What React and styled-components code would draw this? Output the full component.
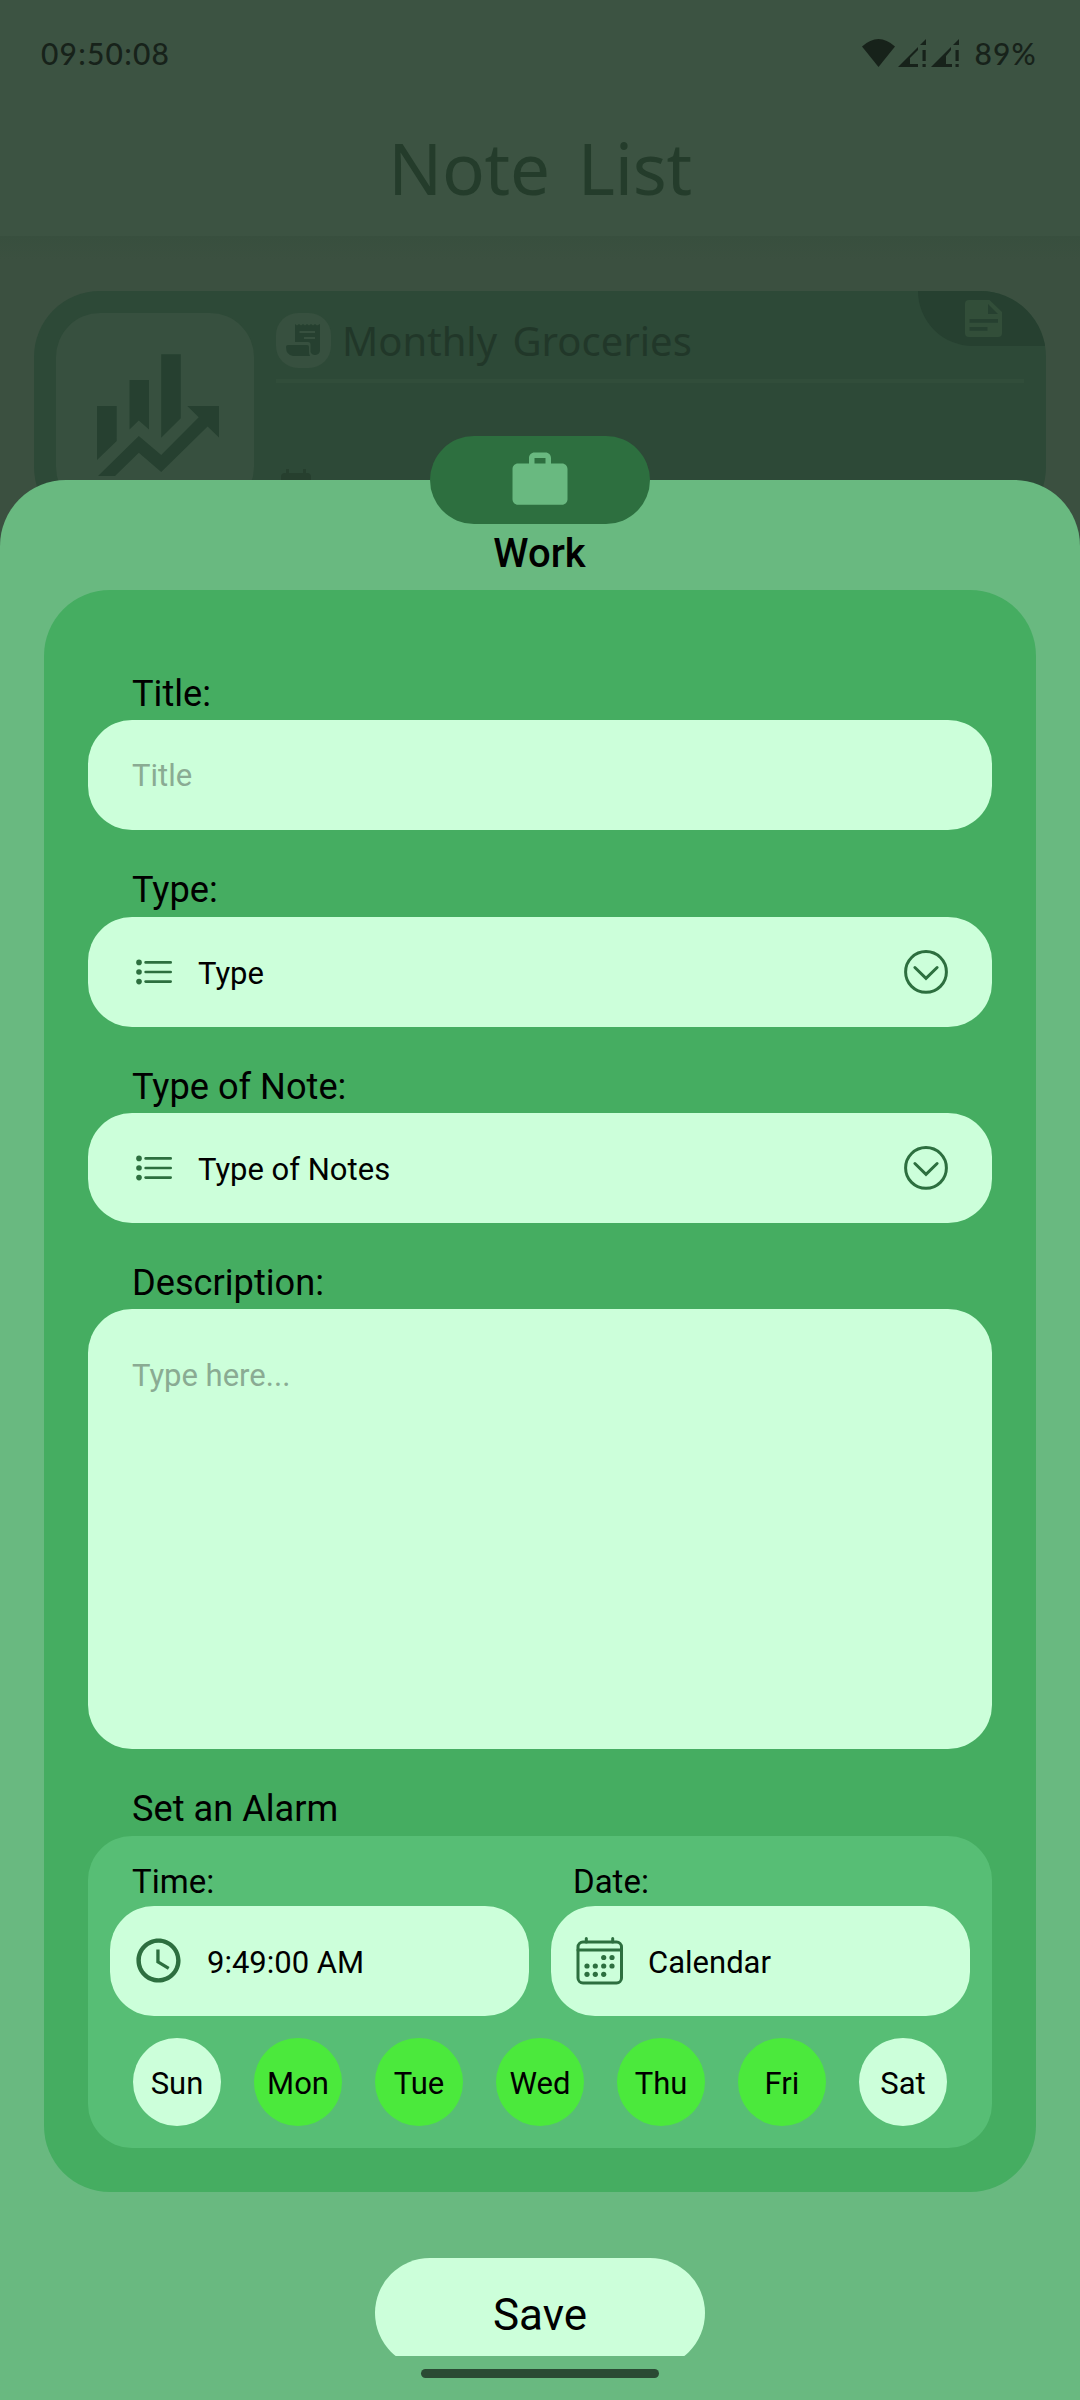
import React from "react";
import styled, { createGlobalStyle } from "styled-components";
import { MdWork, MdAccessTime } from "react-icons/md";

const GlobalStyle = createGlobalStyle`
  * { box-sizing: border-box; }
  body { margin: 0; background: #3b5040; }
`;

const ink = "#2d6f3f";

const Screen = styled.div`
  position: relative;
  width: 1080px;
  height: 2400px;
  overflow: hidden;
  background: #3b5040;
  font-family: Roboto, "Liberation Sans", sans-serif;
`;
const Header = styled.header`
  height: 236px;
  background: #3c5342;
`;
const HeaderShade = styled.div`
  height: 24px;
  background: linear-gradient(#384f3e, #3b5040);
`;
const StatusBar = styled.div`
  display: flex;
  justify-content: space-between;
  align-items: center;
  height: 106px;
  padding: 0 43px 0 41px;
  color: #17221a;
  font: 500 30px/36px Lato, sans-serif;
`;
const Clock = styled.span`
  letter-spacing: 1.2px;
`;
const Battery = styled.span`
  letter-spacing: 1.2px;
`;
const StatusRight = styled.div`
  display: flex;
  align-items: center;
  gap: 14px;
`;
const PageTitle = styled.h1`
  margin: 0;
  padding-top: 13px;
  text-align: center;
  font: 400 71px/98px "Noto Sans", sans-serif;
  letter-spacing: -0.3px;
  word-spacing: 10px;
  color: #243c2b;
`;
const NoteCard = styled.article`
  display: flex;
  gap: 22px;
  margin: 31px 34px 0;
  height: 242px;
  padding: 22px;
  border-radius: 66px;
  background: #2d4937;
  position: relative;
  overflow: hidden;
`;
const NoteTile = styled.div`
  width: 198px;
  height: 198px;
  flex: none;
  border-radius: 44px;
  background: #37503f;
`;
const NoteBody = styled.div`
  flex: 1;
`;
const NoteHead = styled.div`
  display: flex;
  align-items: center;
  gap: 11px;
  height: 70px;
  padding-bottom: 11px;
  border-bottom: 4px solid #314d3a;
`;
const SmallTile = styled.div`
  width: 55px;
  height: 55px;
  border-radius: 22px;
  background: #37503f;
`;
const NoteName = styled.span`
  font: 400 40px/55px "Noto Sans", sans-serif;
  word-spacing: 5px;
  color: #213729;
`;
const NoteDate = styled.div`
  display: flex;
  padding: 86px 0 0 5px;
  color: #263f2e;
`;
const CornerTab = styled.div`
  position: absolute;
  top: 0;
  right: 0;
  width: 128px;
  height: 55px;
  border-bottom-left-radius: 55px;
  background: #264030;
`;
const Sheet = styled.section`
  position: absolute;
  left: 0;
  top: 480px;
  width: 1080px;
  height: 1920px;
  padding: 0 44px;
  border-radius: 66px 66px 0 0;
  background: #69b980;
`;
const CategoryPill = styled.div`
  display: flex;
  align-items: center;
  justify-content: center;
  width: 220px;
  height: 88px;
  margin: -44px auto 0;
  border-radius: 44px;
  background: ${ink};
  color: #69b980;
`;
const CategoryName = styled.h2`
  margin: 0;
  height: 66px;
  padding: 6px 1px 0 0;
  text-align: center;
  font-size: 40px;
  line-height: 47px;
  font-weight: 500;
  color: #000;
`;
const Panel = styled.div`
  height: 1602px;
  padding: 88px 44px 0;
  border-radius: 66px;
  background: #45ad61;
`;
const Field = styled.div`
  margin-bottom: 44px;
`;
const Label = styled.label`
  display: block;
  padding: 0 0 11px 44px;
  font-size: 36.2px;
  line-height: 31.33px;
`;
const Box = styled.div`
  display: flex;
  align-items: center;
  height: 110px;
  padding: ${(p) => p.$pad || "0 44px"};
  border-radius: 44px;
  background: #ccffda;
  font-size: 31px;
  line-height: 36px;
`;
const Area = styled(Box)`
  height: 440px;
  align-items: flex-start;
  padding-top: 47px;
`;
const Placeholder = styled.span`
  padding-top: 2px;
  color: #8aab93;
`;
const Value = styled.span`
  flex: 1;
  padding: 4px 0 0 ${(p) => p.$gap}px;
`;
const AlarmBox = styled.div`
  height: 312px;
  padding: 26px 22px 0;
  border-radius: 44px;
  background: #57be75;
`;
const AlarmFields = styled.div`
  display: grid;
  grid-template-columns: 1fr 1fr;
  gap: 22px;
`;
const SmallLabel = styled(Label)`
  padding: 0 0 4px 22px;
  font-size: 33px;
  line-height: 40px;
`;
const Days = styled.div`
  display: flex;
  justify-content: space-between;
  padding: 22px 23px 0;
`;
const Day = styled.button`
  width: 88px;
  height: 88px;
  padding: 4px 0 0;
  border: 0;
  border-radius: 50%;
  background: ${(p) => (p.$on ? "#4be93c" : "#ccffda")};
  font: 400 31px/36px Roboto, sans-serif;
  color: #000;
`;
const SaveClip = styled.div`
  height: 164px;
  padding-top: 66px;
  overflow: hidden;
`;
const SaveButton = styled.button`
  display: block;
  width: 330px;
  height: 110px;
  margin: 0 auto;
  padding: 3px 0 0;
  border: 0;
  border-radius: 55px;
  background: #ccffda;
  font: 400 44px/52px Roboto, sans-serif;
  color: #000;
`;
const HomeBar = styled.div`
  width: 238px;
  height: 9px;
  margin: 13px auto 0;
  border-radius: 5px;
  background: #2b4a34;
`;

const StatusIcons = () => (
  <svg width="98" height="30" viewBox="0 0 98 30" fill="currentColor">
    <path d="M0 8.5Q16.5-6.5 33 8.5L16.5 29z" />
    {[36, 69].map((x, i) => (
      <g key={x} transform={`translate(${x} 0)`}>
        <path d="M28 1v6h-6z" />
        <path d={i ? "M0 29L20 9v3l-5 6v8h6v3z" : "M0 29L20 9v3l-8 8v6h8v3z"} />
        <path d="M24.500 12h3.200v11h-3.200zM24.500 26h3.200v3h-3.200z" />
      </g>
    ))}
  </svg>
);

const ChartIcon = () => (
  <svg width="198" height="198" viewBox="56 313 198 198" fill="#264030">
    <path d="M97 406h19.700v35L97 460zM129.500 380H149v49.500l-10.200-9-9.300 9zM161.200 354.300h19.600v64l-19.600 19.500z" />
    <path d="M98 476l40.800-40 22.400 19 37.500-37.700L187.300 406H219v31.500l-11.400-11-46.400 45.500-22.400-19.300L115 476z" />
  </svg>
);

const ReceiptIcon = () => (
  <svg width="55" height="55" viewBox="276 313 55 55">
    <path
      fill="#264030"
      d="M295 324l2 1.500 2-1.500 2 1.500 2-1.500 2 1.500 2-1.500 2 1.500 2-1.500 2 1.500 2-1.500 2 1.500 3-1.500v27a5 5 0 0 1-9.500 1v-7.500a2.500 2.500 0 0 0-2.500-2.500H295z"
    />
    <path fill="#264030" d="M286 347q0-2 2-2h19q2 0 2 2v5q0 2 1 4h-17q-7-1-7-9z" />
    <path stroke="#37503f" strokeWidth="2.200" d="M299.500 332H315M304 338h11" />
  </svg>
);

const DocIcon = () => (
  <svg width="128" height="55" viewBox="918 291 128 55">
    <path fill="#324e39" d="M969 300h20.500L1002 312v21q0 4-4 4h-29q-4 0-4-4v-29q0-4 4-4z" />
    <path fill="#264030" d="M988 304l10 10h-10zM969.500 319h28.500v3.800h-28.500zM969.500 327h18v3.800h-18z" />
  </svg>
);

const DateIcon = () => (
  <svg width="30" height="34" viewBox="0 0 30 34" fill="currentColor">
    <path d="M5 0h3v4h14V0h3v4h1q4 0 4 4v26H0V8q0-4 4-4h1z" />
  </svg>
);

const ListIcon = () => (
  <svg width="44" height="44" viewBox="0 0 44 44" fill={ink} stroke={ink}>
    {[12.4, 22, 31.6].map((y) => (
      <g key={y}>
        <circle cx="7" cy={y} r="2.800" stroke="none" />
        <path d={`M13.600 ${y}H38.700`} strokeWidth="2.600" strokeLinecap="round" />
      </g>
    ))}
  </svg>
);

const DownIcon = () => (
  <svg width="44" height="44" viewBox="0 0 44 44" fill="none" stroke={ink} strokeWidth="3">
    <circle cx="22" cy="21.900" r="20.400" />
    <path d="M10.900 17.500L22 28.300l11.100-10.800" strokeLinecap="round" />
  </svg>
);

const CalendarIcon = () => (
  <svg width="48" height="48" viewBox="0 0 48 48" fill="none" stroke={ink} strokeWidth="3">
    <rect x="2" y="5" width="43.500" height="41" rx="5" />
    <path d="M2 13H45.500M10.300 1.500V5M36.700 1.500V5" strokeLinecap="round" />
    <g fill={ink} stroke="none">
      {[[27.700, 20.500], [36, 20.500], [11, 29], [19.300, 29], [27.700, 29], [36, 29], [11, 37.300], [19.300, 37.300], [27.700, 37.300]].map(
        ([x, y]) => (
          <circle key={`${x}-${y}`} cx={x} cy={y} r="2.600" />
        )
      )}
    </g>
  </svg>
);

const week = ["Sun", "Mon", "Tue", "Wed", "Thu", "Fri", "Sat"];

const SelectField = ({ label, value }) => (
  <Field>
    <Label>{label}</Label>
    <Box>
      <ListIcon />
      <Value $gap={22}>{value}</Value>
      <DownIcon />
    </Box>
  </Field>
);

export default function App() {
  return (
    <Screen>
      <GlobalStyle />
      <Header>
        <StatusBar>
          <Clock>09:50:08</Clock>
          <StatusRight>
            <StatusIcons />
            <Battery>89%</Battery>
          </StatusRight>
        </StatusBar>
        <PageTitle>Note List</PageTitle>
      </Header>
      <HeaderShade />
      <NoteCard>
        <NoteTile>
          <ChartIcon />
        </NoteTile>
        <NoteBody>
          <NoteHead>
            <SmallTile>
              <ReceiptIcon />
            </SmallTile>
            <NoteName>Monthly Groceries</NoteName>
          </NoteHead>
          <NoteDate>
            <DateIcon />
          </NoteDate>
        </NoteBody>
        <CornerTab>
          <DocIcon />
        </CornerTab>
      </NoteCard>

      <Sheet>
        <CategoryPill>
          <MdWork size={66} />
        </CategoryPill>
        <CategoryName>Work</CategoryName>
        <Panel>
          <Field>
            <Label>Title:</Label>
            <Box>
              <Placeholder>Title</Placeholder>
            </Box>
          </Field>
          <SelectField label="Type:" value="Type" />
          <SelectField label="Type of Note:" value="Type of Notes" />
          <Field>
            <Label>Description:</Label>
            <Area>
              <Placeholder>Type here...</Placeholder>
            </Area>
          </Field>
          <Label>Set an Alarm</Label>
          <AlarmBox>
            <AlarmFields>
              <div>
                <SmallLabel>Time:</SmallLabel>
                <Box $pad="0 22px">
                  <MdAccessTime size={53} color={ink} />
                  <Value $gap={22}>9:49:00 AM</Value>
                </Box>
              </div>
              <div>
                <SmallLabel>Date:</SmallLabel>
                <Box $pad="0 25px">
                  <CalendarIcon />
                  <Value $gap={24}>Calendar</Value>
                </Box>
              </div>
            </AlarmFields>
            <Days>
              {week.map((d, i) => (
                <Day key={d} $on={i > 0 && i < 6}>
                  {d}
                </Day>
              ))}
            </Days>
          </AlarmBox>
        </Panel>
        <SaveClip>
          <SaveButton>Save</SaveButton>
        </SaveClip>
        <HomeBar />
      </Sheet>
    </Screen>
  );
}
